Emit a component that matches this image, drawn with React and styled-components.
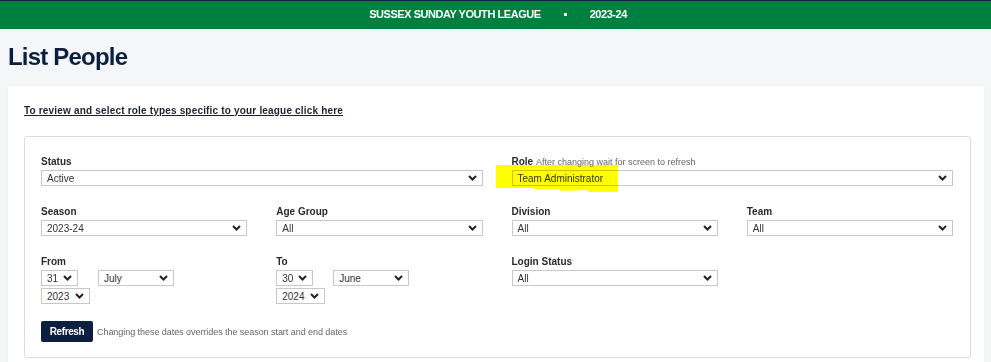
import React from "react";
import styled, { createGlobalStyle } from "styled-components";

const GlobalStyle = createGlobalStyle`
  * {
    box-sizing: border-box;
  }

  body {
    margin: 0;
    background: #f5f6f8;
    font-family: "Liberation Sans", Arial, sans-serif;
    color: #333;
  }
`;

const TopBar = styled.header`
  height: 29px;
  border-top: 1px solid #0b2341;
  background: #00803f;
  display: flex;
  align-items: center;
  justify-content: center;
  gap: 23px;
  padding: 0 0 2px 5px;
  color: #fff;
  font-size: 11px;
  font-weight: bold;
  letter-spacing: -0.45px;
`;

const Dot = styled.span`
  width: 3px;
  height: 3px;
  background: #fff;
`;

const PageTitle = styled.h1`
  margin: 14px 0 15px 8px;
  font-size: 24px;
  line-height: 28px;
  letter-spacing: -0.8px;
  color: #0b1f3f;
`;

const Card = styled.div`
  margin: 0 7px 0 8px;
  background: #fff;
  padding: 19px 13px 24px 16px;
  box-shadow: 0 0 2px rgba(0, 0, 0, 0.06);
`;

const RoleLink = styled.a`
  display: block;
  font-size: 10px;
  line-height: 12px;
  font-weight: bold;
  letter-spacing: 0.18px;
  color: #1b2230;
  text-decoration: underline;
  cursor: pointer;
`;

const FilterBox = styled.div`
  margin-top: 19px;
  border: 1px solid #dcdcdc;
  border-radius: 3px;
  padding: 19px 17px 15px 16px;
`;

const Grid = styled.div`
  display: grid;
  grid-template-columns: repeat(4, 1fr);
  column-gap: 29px;
  row-gap: 20px;
  align-items: start;
`;

const Field = styled.div`
  position: relative;
  grid-column: span ${p => p.$span || 1};
`;

const Label = styled.div`
  font-size: 10px;
  line-height: 12px;
  font-weight: bold;
  color: #2a2a2a;
  margin-bottom: 2px;
  white-space: nowrap;
`;

const Hint = styled.span`
  font-size: 9px;
  font-weight: normal;
  color: #666;
`;

const SelectBox = styled.div`
  display: flex;
  align-items: center;
  justify-content: space-between;
  width: ${p => p.$width || "100%"};
  height: 16px;
  padding: 0 5px 0 5px;
  border: 1px solid #c8c8c8;
  background: #fff;
  font-size: 10px;
  color: #333;
  white-space: nowrap;
`;

const DateRow = styled.div`
  display: flex;
  gap: 20px;
`;

const DateStack = styled.div`
  display: flex;
  flex-direction: column;
  align-items: flex-start;
  gap: 2px;
`;

const ButtonRow = styled.div`
  display: flex;
  align-items: center;
  gap: 4px;
  margin-top: 17px;
`;

const RefreshButton = styled.button`
  width: 52px;
  height: 21px;
  border: none;
  border-radius: 2px;
  background: #0c1f3f;
  color: #fff;
  font-family: inherit;
  font-size: 10px;
  font-weight: bold;
  letter-spacing: -0.4px;
  cursor: pointer;
`;

const Note = styled.span`
  font-size: 9px;
  color: #666;
  letter-spacing: -0.05px;
`;

const Highlight = styled.svg`
  position: absolute;
  left: -16px;
  top: 9px;
  mix-blend-mode: multiply;
  pointer-events: none;
`;

const Chevron = () => (
  <svg width="9" height="6" viewBox="0 0 9 6">
    <polyline points="1,1 4.5,4.5 8,1" fill="none" stroke="#222" strokeWidth="2" />
  </svg>
);

const Select = ({ value, width }) => (
  <SelectBox $width={width}>
    <span>{value}</span>
    <Chevron />
  </SelectBox>
);

const DatePicker = ({ day, month, year }) => (
  <DateStack>
    <DateRow>
      <Select value={day} width="37px" />
      <Select value={month} width="76px" />
    </DateRow>
    <Select value={year} width="49px" />
  </DateStack>
);

export default function App() {
  return (
    <>
      <GlobalStyle />
      <TopBar>
        <span>SUSSEX SUNDAY YOUTH LEAGUE</span>
        <Dot />
        <span>2023-24</span>
      </TopBar>
      <PageTitle>List People</PageTitle>
      <Card>
        <RoleLink>To review and select role types specific to your league click here</RoleLink>
        <FilterBox>
          <Grid>
            <Field $span={2}>
              <Label>Status</Label>
              <Select value="Active" />
            </Field>
            <Field $span={2}>
              <Label>
                Role <Hint>After changing wait for screen to refresh</Hint>
              </Label>
              <Select value="Team Administrator" />
              <Highlight width="123" height="28" viewBox="0 0 123 28">
                <polygon
                  points="0,0 122,0 122,27 93,27 91,25 66,26 63,24 38,24 36,23 0,23"
                  fill="#ffff00"
                />
              </Highlight>
            </Field>
            <Field>
              <Label>Season</Label>
              <Select value="2023-24" />
            </Field>
            <Field>
              <Label>Age Group</Label>
              <Select value="All" />
            </Field>
            <Field>
              <Label>Division</Label>
              <Select value="All" />
            </Field>
            <Field>
              <Label>Team</Label>
              <Select value="All" />
            </Field>
            <Field>
              <Label>From</Label>
              <DatePicker day="31" month="July" year="2023" />
            </Field>
            <Field>
              <Label>To</Label>
              <DatePicker day="30" month="June" year="2024" />
            </Field>
            <Field>
              <Label>Login Status</Label>
              <Select value="All" />
            </Field>
          </Grid>
          <ButtonRow>
            <RefreshButton>Refresh</RefreshButton>
            <Note>Changing these dates overrides the season start and end dates</Note>
          </ButtonRow>
        </FilterBox>
      </Card>
    </>
  );
}
